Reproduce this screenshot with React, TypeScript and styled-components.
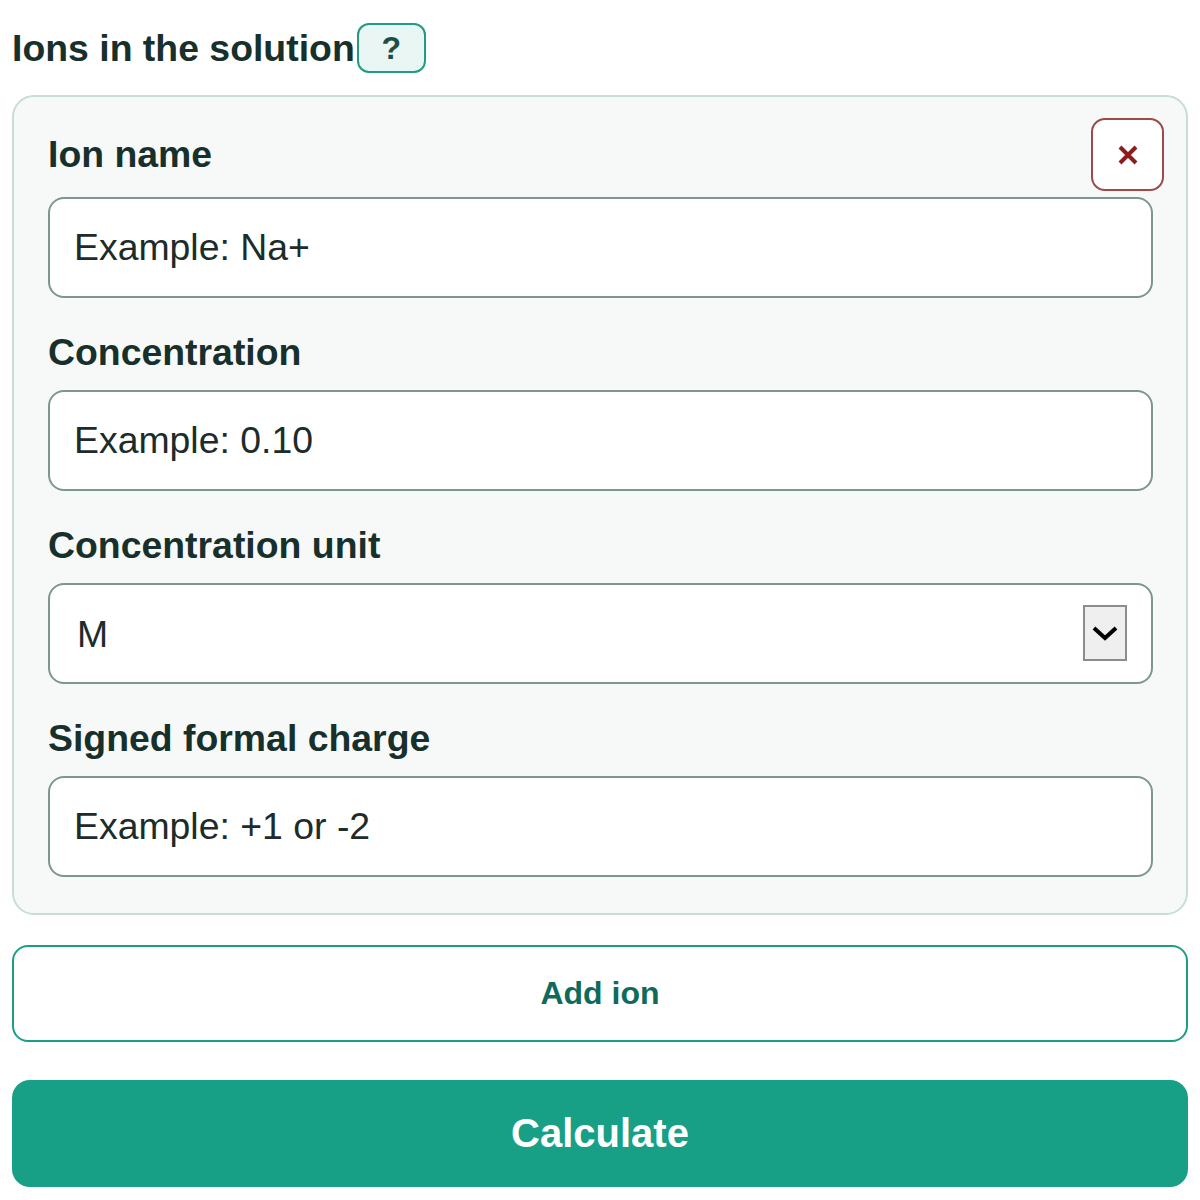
import styled, {createGlobalStyle} from 'styled-components';

const GlobalStyle = createGlobalStyle`
  body {
    margin: 0;
    background: #ffffff;
    font-family: "Liberation Sans", Arial, sans-serif;
  }
`

const Page = styled.div`
  padding: 23px 12px 0 12px;
  color: #17302c;
`
const TitleRow = styled.div`
  display: flex;
  align-items: center;
  height: 50px;
  margin-bottom: 22px;
`
const Title = styled.h3`
  margin: 0;
  font-size: 37.4px;
  font-weight: bold;
  line-height: 43px;
`
const HelpButton = styled.button`
  margin-left: 2px;
  width: 69px;
  height: 50px;
  box-sizing: border-box;
  border: 2px solid #1f9c83;
  border-radius: 12px;
  background: #e9f6f3;
  color: #1c4f48;
  font-family: "Liberation Sans", Arial, sans-serif;
  font-weight: bold;
  font-size: 32px;
  padding: 0;
`
const Card = styled.div`
  border: 2px solid #c8ddd7;
  border-radius: 22px;
  background: #f7f9f9;
  padding: 21px 22px 36px 34px;
`
const CardHeader = styled.div`
  display: flex;
  align-items: center;
  justify-content: space-between;
  height: 73px;
  margin-bottom: 6px;
`
const Label = styled.label`
  display: block;
  font-size: 37.4px;
  font-weight: bold;
  line-height: 43px;
  margin-bottom: 16px;
`
const HeaderLabel = styled(Label)`
  margin-bottom: 0;
`
const RemoveButton = styled.button`
  width: 73px;
  height: 73px;
  box-sizing: border-box;
  border: 2px solid #a24848;
  border-radius: 14px;
  background: #ffffff;
  display: flex;
  align-items: center;
  justify-content: center;
  padding: 0;
`
const Field = styled.div<{first?: boolean}>`
  margin-top: ${p => (p.first ? '0' : '33px')};
  margin-right: 11px;
`
const Input = styled.input`
  display: block;
  width: 100%;
  height: 101px;
  box-sizing: border-box;
  border: 2px solid #7e9692;
  border-radius: 16px;
  background: #ffffff;
  padding: 0 24px;
  font-family: "Liberation Sans", Arial, sans-serif;
  font-size: 37.4px;
  color: #1c2c2a;
  outline: none;
  &::placeholder {
    color: #1c2c2a;
    opacity: 1;
  }
`
const SelectWrap = styled.div`
  position: relative;
`
const Select = styled.select`
  display: block;
  width: 100%;
  height: 101px;
  box-sizing: border-box;
  border: 2px solid #7e9692;
  border-radius: 16px;
  background: #ffffff;
  padding: 0 27px;
  font-family: "Liberation Sans", Arial, sans-serif;
  font-size: 37.4px;
  color: #1c2c2a;
  appearance: none;
  outline: none;
`
const ArrowBox = styled.span`
  position: absolute;
  right: 26px;
  top: 22px;
  width: 44px;
  height: 56px;
  box-sizing: border-box;
  border: 2px solid #8c8c8c;
  background: #efefef;
  display: flex;
  align-items: center;
  justify-content: center;
  pointer-events: none;
`
const AddButton = styled.button`
  display: block;
  width: 100%;
  height: 97px;
  margin-top: 30px;
  box-sizing: border-box;
  border: 2px solid #1a9e84;
  border-radius: 16px;
  background: #ffffff;
  color: #0f6a5c;
  font-family: "Liberation Sans", Arial, sans-serif;
  font-weight: bold;
  font-size: 32px;
`
const CalcButton = styled.button`
  display: block;
  width: 100%;
  height: 107px;
  margin-top: 38px;
  border: none;
  border-radius: 18px;
  background: #17a086;
  color: #ffffff;
  font-family: "Liberation Sans", Arial, sans-serif;
  font-weight: bold;
  font-size: 40px;
`

function App() {
  return (
    <Page>
      <GlobalStyle/>
      <TitleRow>
        <Title>Ions in the solution</Title>
        <HelpButton>?</HelpButton>
      </TitleRow>
      <Card>
        <CardHeader>
          <HeaderLabel>Ion name</HeaderLabel>
          <RemoveButton aria-label="Remove ion">
            <svg width="22" height="22" viewBox="0 0 22 22">
              <path d="M3 3 L19 19 M19 3 L3 19" stroke="#8c1d1d" strokeWidth="4" fill="none"/>
            </svg>
          </RemoveButton>
        </CardHeader>
        <Field first>
          <Input placeholder="Example: Na+"/>
        </Field>
        <Field>
          <Label>Concentration</Label>
          <Input placeholder="Example: 0.10"/>
        </Field>
        <Field>
          <Label>Concentration unit</Label>
          <SelectWrap>
            <Select defaultValue="M">
              <option value="M">M</option>
              <option value="mM">mM</option>
            </Select>
            <ArrowBox>
              <svg width="26" height="16" viewBox="0 0 26 16">
                <path d="M2 3 L13 13 L24 3" stroke="#000" strokeWidth="4" fill="none"/>
              </svg>
            </ArrowBox>
          </SelectWrap>
        </Field>
        <Field>
          <Label>Signed formal charge</Label>
          <Input placeholder="Example: +1 or -2"/>
        </Field>
      </Card>
      <AddButton>Add ion</AddButton>
      <CalcButton>Calculate</CalcButton>
    </Page>
  );
}

export default App
